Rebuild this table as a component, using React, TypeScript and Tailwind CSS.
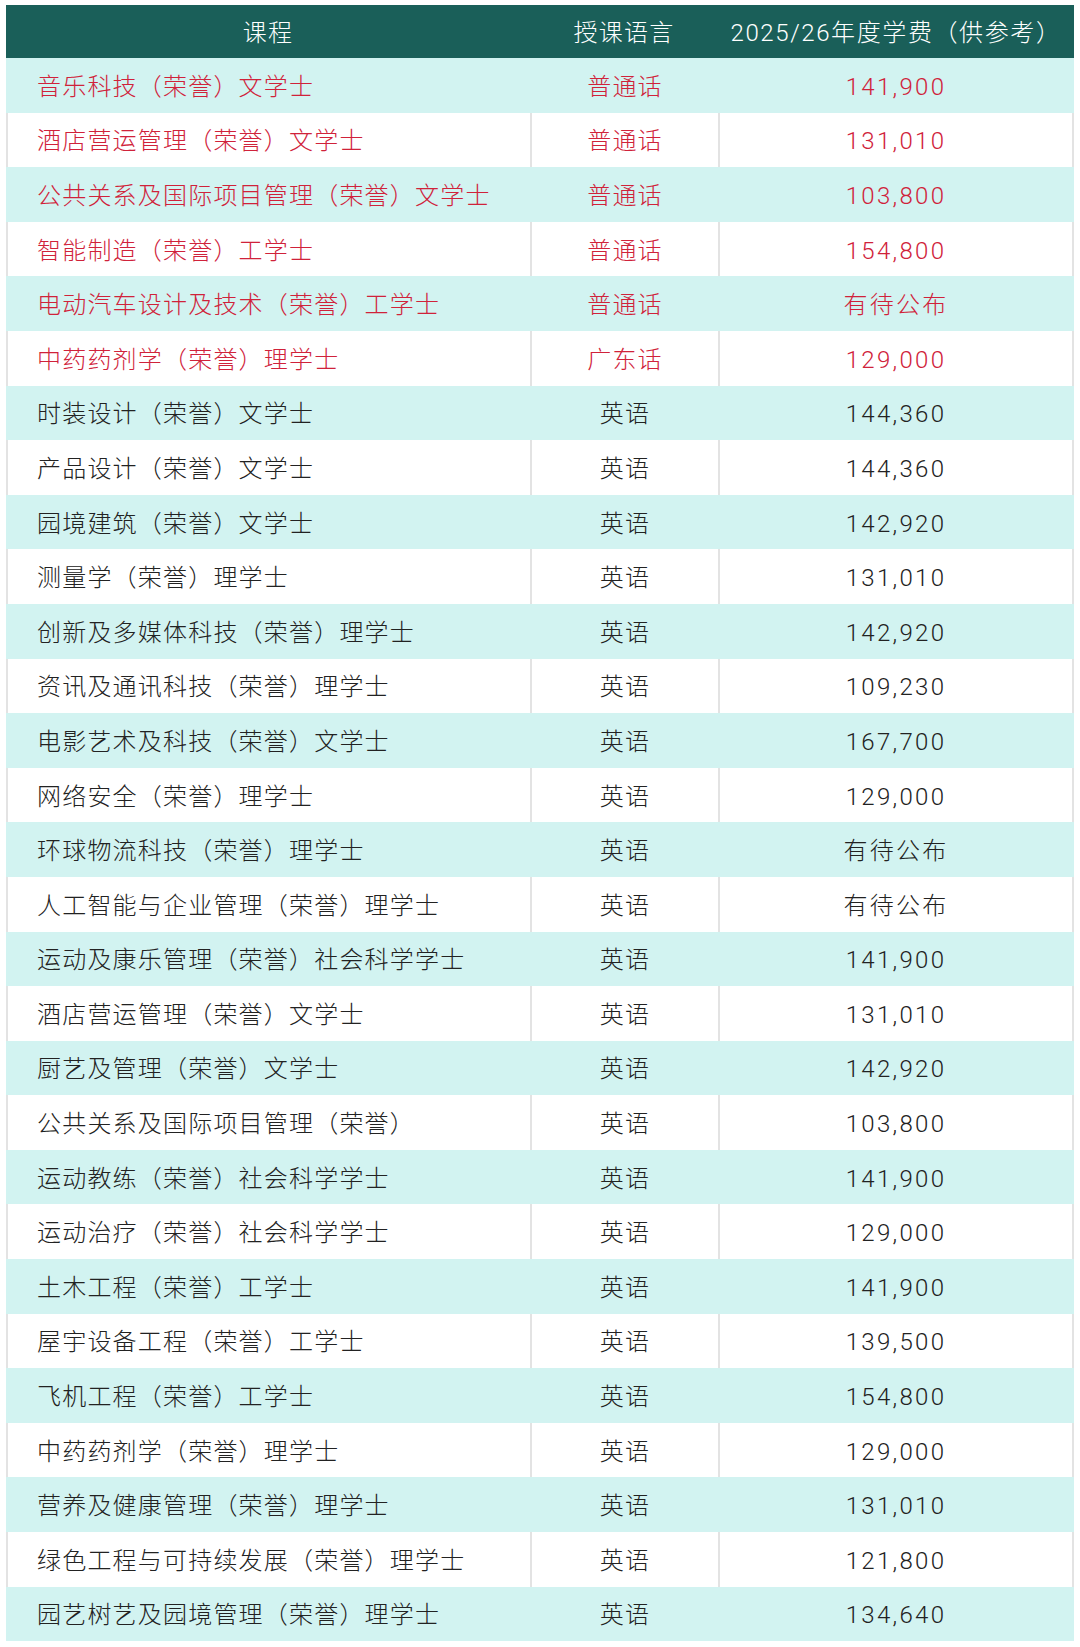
import React from "react";

type Course = {
  name: string;
  lang: string;
  fee: string;
  highlight?: boolean;
};

const courses: Course[] = [
  { name: "音乐科技（荣誉）文学士", lang: "普通话", fee: "141,900", highlight: true },
  { name: "酒店营运管理（荣誉）文学士", lang: "普通话", fee: "131,010", highlight: true },
  { name: "公共关系及国际项目管理（荣誉）文学士", lang: "普通话", fee: "103,800", highlight: true },
  { name: "智能制造（荣誉）工学士", lang: "普通话", fee: "154,800", highlight: true },
  { name: "电动汽车设计及技术（荣誉）工学士", lang: "普通话", fee: "有待公布", highlight: true },
  { name: "中药药剂学（荣誉）理学士", lang: "广东话", fee: "129,000", highlight: true },
  { name: "时装设计（荣誉）文学士", lang: "英语", fee: "144,360" },
  { name: "产品设计（荣誉）文学士", lang: "英语", fee: "144,360" },
  { name: "园境建筑（荣誉）文学士", lang: "英语", fee: "142,920" },
  { name: "测量学（荣誉）理学士", lang: "英语", fee: "131,010" },
  { name: "创新及多媒体科技（荣誉）理学士", lang: "英语", fee: "142,920" },
  { name: "资讯及通讯科技（荣誉）理学士", lang: "英语", fee: "109,230" },
  { name: "电影艺术及科技（荣誉）文学士", lang: "英语", fee: "167,700" },
  { name: "网络安全（荣誉）理学士", lang: "英语", fee: "129,000" },
  { name: "环球物流科技（荣誉）理学士", lang: "英语", fee: "有待公布" },
  { name: "人工智能与企业管理（荣誉）理学士", lang: "英语", fee: "有待公布" },
  { name: "运动及康乐管理（荣誉）社会科学学士", lang: "英语", fee: "141,900" },
  { name: "酒店营运管理（荣誉）文学士", lang: "英语", fee: "131,010" },
  { name: "厨艺及管理（荣誉）文学士", lang: "英语", fee: "142,920" },
  { name: "公共关系及国际项目管理（荣誉）", lang: "英语", fee: "103,800" },
  { name: "运动教练（荣誉）社会科学学士", lang: "英语", fee: "141,900" },
  { name: "运动治疗（荣誉）社会科学学士", lang: "英语", fee: "129,000" },
  { name: "土木工程（荣誉）工学士", lang: "英语", fee: "141,900" },
  { name: "屋宇设备工程（荣誉）工学士", lang: "英语", fee: "139,500" },
  { name: "飞机工程（荣誉）工学士", lang: "英语", fee: "154,800" },
  { name: "中药药剂学（荣誉）理学士", lang: "英语", fee: "129,000" },
  { name: "营养及健康管理（荣誉）理学士", lang: "英语", fee: "131,010" },
  { name: "绿色工程与可持续发展（荣誉）理学士", lang: "英语", fee: "121,800" },
  { name: "园艺树艺及园境管理（荣誉）理学士", lang: "英语", fee: "134,640" },
];

const App = () => {
  return (
    <div className="w-[1080px] min-h-[1647px] bg-white pt-[5px] px-[6px] font-['Roboto','Noto_Sans_CJK_SC',sans-serif] text-[24px] font-light tracking-[1.2px]">
      <div className="w-[1068px] flex flex-col">
        {/* header */}
        <div className="flex h-[53px] items-center pt-[2px] bg-[#1a5f59] text-white">
          <div className="w-[524px] text-center">课程</div>
          <div className="w-[188px] text-center">授课语言</div>
          <div className="w-[356px] text-center tracking-[1.6px]">2025/26年度学费（供参考）</div>
        </div>

        {/* rows */}
        {courses.map((c, i) => {
          const striped = i % 2 === 0;
          const color = c.highlight ? "text-[#d0223a]" : "text-[#222222]";
          const line = striped ? "border-[#d2f3f1]" : "border-[#e3e3e3]";
          return (
            <div
              key={i}
              className={`flex h-[54.6px] items-center ${color} ${striped ? "bg-[#d2f3f1]" : "bg-white"}`}
            >
              <div className={`w-[524px] h-full flex items-center pt-[3px] pl-[29px] border-l-2 ${line}`}>
                {c.name}
              </div>
              <div className={`w-[188px] h-full flex items-center justify-center pt-[3px] border-l-2 ${line}`}>
                {c.lang}
              </div>
              <div className={`w-[356px] h-full flex items-center justify-center pt-[3px] tracking-[2.3px] border-x-2 ${line}`}>
                {c.fee}
              </div>
            </div>
          );
        })}
      </div>
    </div>
  );
};

export default App;
